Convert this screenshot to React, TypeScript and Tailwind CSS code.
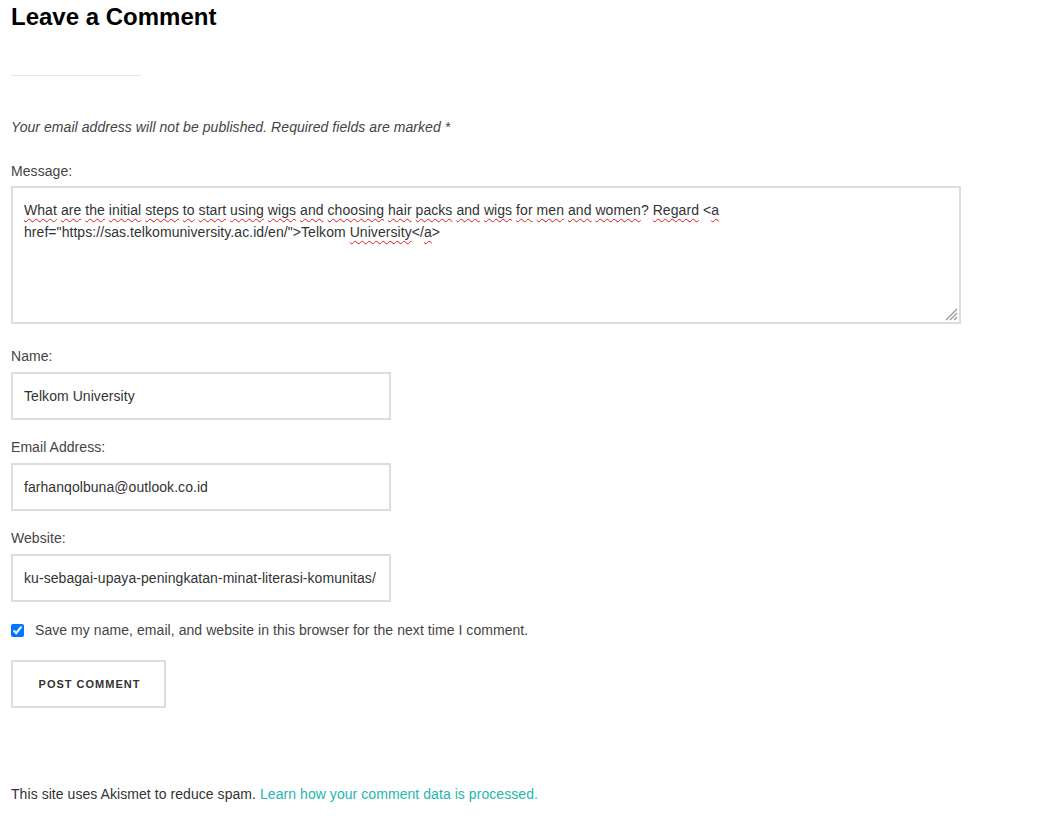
import React from "react";

const Wavy = ({ children }: { children: React.ReactNode }) => (
  <span className="underline decoration-wavy decoration-[#e31b1b] decoration-[1.2px] underline-offset-[3px]">
    {children}
  </span>
);

export default function App() {
  const line1 = "What are the initial steps to start using wigs and choosing hair packs and wigs for men and women?".split(" ");
  return (
    <div className="min-h-screen bg-white px-[11px] text-[14px] leading-[20px] tracking-[0.06px] text-[#333]" style={{ fontFamily: '"Liberation Sans", Arial, sans-serif' }}>
      <h2 className="pt-[2px] text-[24px] font-bold leading-[30px] tracking-normal text-black">Leave a Comment</h2>
      <div className="mt-[43px] h-px w-[130px] bg-[#e6e6e6]" />
      <p className="mt-[41px] italic text-[#444]">
        Your email address will not be published. Required fields are marked *
      </p>
      <div className="mt-[24px] text-[#444]">Message:</div>
      <div className="relative mt-[5px] h-[138px] w-[950px] border-2 border-[#ddd] px-[11px] pt-[11px] leading-[22.4px] text-[#333]">
        {line1.map((w, i) => {
          const endsQ = w.endsWith("?");
          return (
            <React.Fragment key={i}>
              <Wavy>{endsQ ? w.slice(0, -1) : w}</Wavy>
              {endsQ ? "?" : ""}{" "}
            </React.Fragment>
          );
        })}
        <Wavy>Regard</Wavy> {"<"}
        <Wavy>a</Wavy>
        <br />
        href="https://sas.telkomuniversity.ac.id/en/"{">"}Telkom <Wavy>University</Wavy>
        {"</"}
        <Wavy>a</Wavy>
        {">"}
        <svg className="absolute bottom-[1px] right-[1px]" width="14" height="14" viewBox="0 0 14 14">
          <g stroke="#9a9a9a" strokeWidth="1.2">
            <line x1="13" y1="2" x2="2" y2="13" />
            <line x1="13" y1="6" x2="6" y2="13" />
            <line x1="13" y1="10" x2="10" y2="13" />
          </g>
        </svg>
      </div>

      <div className="mt-[22px] text-[#444]">Name:</div>
      <div className="mt-[6px] flex h-[48px] w-[380px] items-center border-2 border-[#ddd] px-[11px]">Telkom University</div>

      <div className="mt-[17px] text-[#444]">Email Address:</div>
      <div className="mt-[6px] flex h-[48px] w-[380px] items-center border-2 border-[#ddd] px-[11px]">farhanqolbuna@outlook.co.id</div>

      <div className="mt-[17px] text-[#444]">Website:</div>
      <div className="mt-[6px] flex h-[48px] w-[380px] items-center overflow-hidden whitespace-nowrap border-2 border-[#ddd] px-[11px]">
        ku-sebagai-upaya-peningkatan-minat-literasi-komunitas/
      </div>

      <label className="mt-[18px] flex items-center gap-[11px] text-[#444]">
        <input type="checkbox" defaultChecked className="m-0 h-[13px] w-[13px] accent-[#0075ff]" />
        <span>Save my name, email, and website in this browser for the next time I comment.</span>
      </label>

      <button className="mt-[20px] flex h-[48px] w-[155px] items-center justify-center border-2 border-[#ddd] bg-white pl-[2px] text-[11px] font-bold tracking-[1px] text-[#333]">
        POST COMMENT
      </button>

      <p className="mt-[76px] text-[#333]">
        This site uses Akismet to reduce spam.{" "}
        <a href="#" className="text-[#26b5b1]">Learn how your comment data is processed.</a>
      </p>
    </div>
  );
}
